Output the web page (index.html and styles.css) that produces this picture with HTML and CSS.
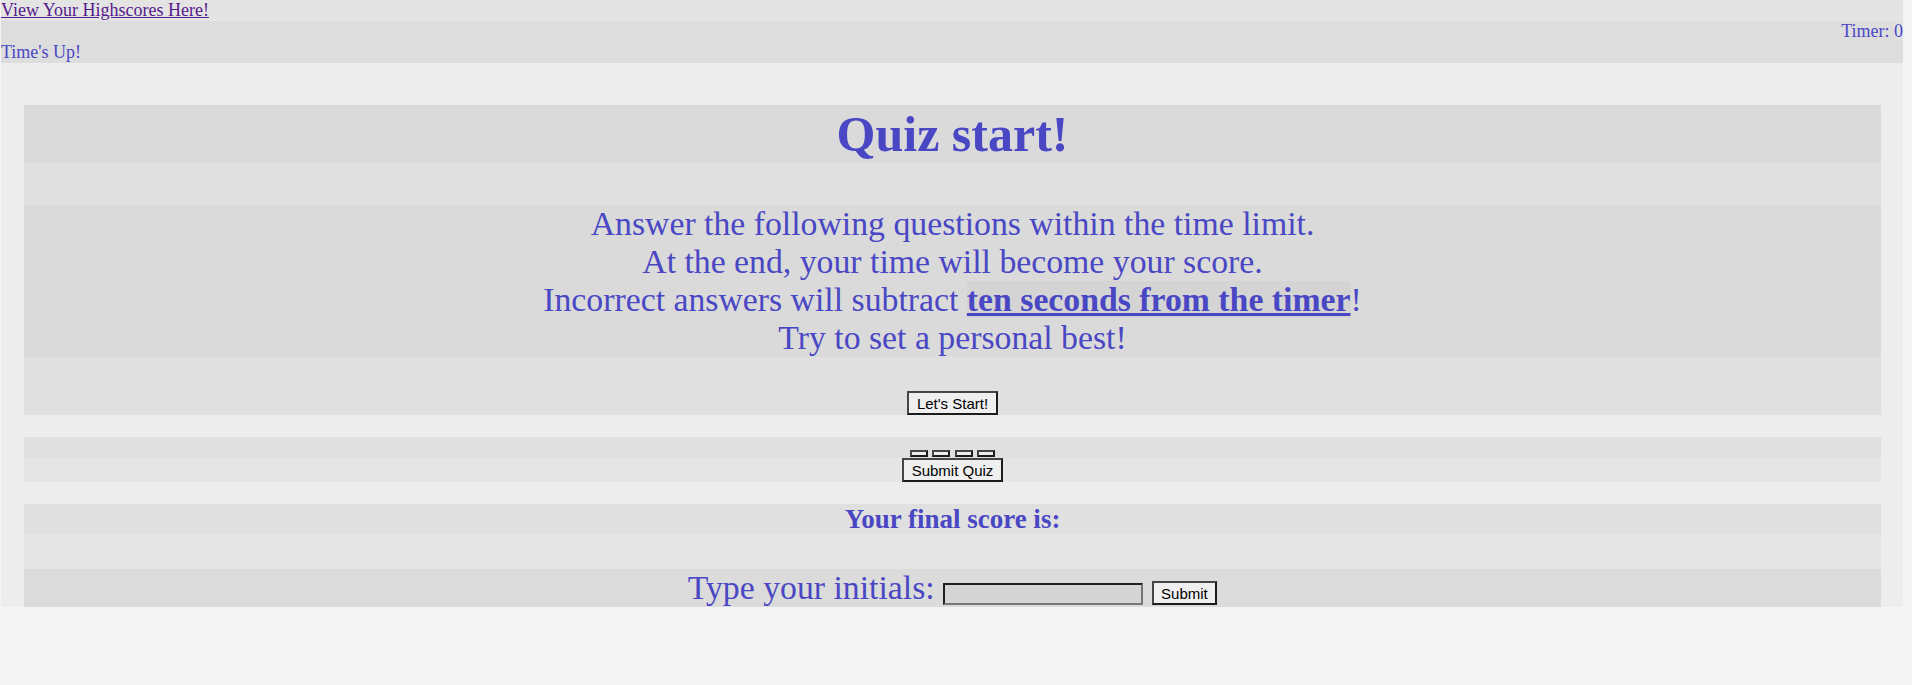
FILE: index.html
```html
<!DOCTYPE html>
<html lang="en">
<head>
<meta charset="utf-8">
<title>Quiz</title>
<link rel="stylesheet" href="styles.css">
</head>
<body>
<div class="page">
  <div class="scores-row"><a class="scores-link" href="#">View Your Highscores Here!</a></div>
  <header class="status">
    <div class="timer">Timer: <span class="timer-value">0</span></div>
    <div class="times-up">Time's Up!</div>
  </header>
  <main class="main">
    <section class="card intro">
      <h1 class="title">Quiz start!</h1>
      <p class="rules">Answer the following questions within the time limit.<br>At the end, your time will become your score.<br>Incorrect answers will subtract <a class="penalty" href="#">ten seconds from the timer</a>!<br>Try to set a personal best!</p>
      <div class="start-row"><button class="btn">Let's Start!</button></div>
    </section>
    <section class="card quiz">
      <div class="choices">
        <button class="btn btn-empty"></button>
        <button class="btn btn-empty"></button>
        <button class="btn btn-empty"></button>
        <button class="btn btn-empty"></button>
      </div>
      <div class="submit-row"><button class="btn">Submit Quiz</button></div>
    </section>
    <section class="card result">
      <h2 class="final">Your final score is:</h2>
      <div class="score"></div>
      <div class="initials">Type your initials: <input class="initials-input" type="text"> <button class="btn">Submit</button></div>
    </section>
  </main>
</div>
</body>
</html>
```
FILE: styles.css
```css
html, body {
  margin: 0;
  padding: 0;
}
body {
  background: #f4f4f4;
  font-family: "Liberation Serif", "Times New Roman", serif;
  font-size: 18px;
  color: #4a47c4;
}
.page {
  margin-left: 1px;
  width: 1902px;
  background: #ededed;
}
.scores-row {
  background: #e4e4e4;
  line-height: 21px;
  height: 21px;
}
.scores-link {
  color: #551a8b;
}
.status {
  background: #dddddd;
  line-height: 21px;
}
.timer {
  text-align: right;
}
.timer-value {
  background: #e1e1e1;
}
.main {
  padding: 42px 22px 0 23px;
}
.card {
  background: #e0e0e0;
  margin-bottom: 22px;
}
.card:last-child {
  margin-bottom: 0;
}
.title {
  margin: 0;
  background: #dadada;
  font-size: 50px;
  line-height: 58px;
  font-weight: 700;
  text-align: center;
}
.rules {
  margin: 42px 0 0;
  background: #dadada;
  font-size: 33.75px;
  line-height: 38px;
  text-align: center;
}
.penalty {
  color: #4a47c4;
  font-weight: 700;
  background: #d4d4d4;
  text-decoration-thickness: 3px;
}
.start-row {
  display: flex;
  justify-content: center;
  padding-top: 34px;
}
.btn {
  font-family: "Liberation Sans", Arial, sans-serif;
  font-size: 15px;
  line-height: 17px;
  color: #000;
  background: #efefef;
  padding: 2px 7.5px 1px;
  border: 2px solid;
  border-color: #454545 #1c1c1c #1c1c1c #454545;
  border-radius: 0;
  margin: 0;
}
.choices {
  height: 21px;
  display: flex;
  justify-content: center;
  align-items: flex-end;
  gap: 4.5px;
  padding-bottom: 1px;
  box-sizing: border-box;
}
.btn-empty {
  width: 18px;
  height: 7px;
  padding: 0;
}
.submit-row {
  background: #e5e5e5;
  display: flex;
  justify-content: center;
}
.final {
  margin: 0;
  font-size: 27px;
  line-height: 31px;
  font-weight: 700;
  text-align: center;
}
.score {
  height: 34px;
  background: #e5e5e5;
}
.initials {
  background: #dbdbdb;
  height: 38px;
  font-size: 33.75px;
  line-height: 38px;
  text-align: center;
}
.initials-input {
  width: 192px;
  font-family: "Liberation Sans", Arial, sans-serif;
  font-size: 15px;
  line-height: 16px;
  padding: 1px 2px;
  border: 2px solid;
  border-color: #1e1e1e #767676 #767676 #1e1e1e;
  background: #d5d5d5;
  margin: 0;
}
```
